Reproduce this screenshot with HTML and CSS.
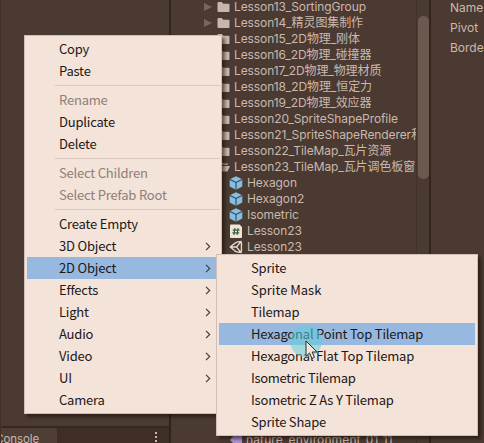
FILE: index.html
```html
<!DOCTYPE html>
<html lang="zh-CN">
<head>
<meta charset="utf-8">
<title>Editor</title>
<link rel="stylesheet" href="styles.css">
</head>
<body>
<svg class="defs" aria-hidden="true">
  <symbol id="folder" viewBox="0 0 13 12"><path d="M.5 2Q.5 1 1.500 1H4.800L6.300 2.700H11.500Q12.500 2.700 12.500 3.700V10Q12.500 11 11.500 11H1.500Q.5 11 .5 10Z" fill="#c9b6ab"/></symbol>
  <symbol id="open" viewBox="0 0 13 12"><path d="M.5 2Q.5 1 1.500 1H5L6.500 2.500H10Q11 2.500 11 3.700H4L1.500 9Z" fill="#c9b6ab"/><path d="M4.500 5H13L10.500 10.500H1.500Z" fill="#c9b6ab"/></symbol>
  <symbol id="cube" viewBox="0 0 14 14"><path d="M7 .3 13.300 3.200V10.600L7 13.800.7 10.600V3.200Z" fill="#88bfdf"/><path d="M1 3.500 7 6.400 13 3.500M7 6.400V13.500" fill="none" stroke="#29485a" stroke-width="1.100"/></symbol>
  <symbol id="script" viewBox="0 0 14 14"><path d="M1 1.500Q1 .5 2 .5H10.500L13 3V13Q13 14 12 14H2Q1 14 1 13Z" fill="#efe5d8"/><path d="M5.900 4 4.900 11M9.100 4 8.100 11M3.700 6.100H10.500M3.400 8.900H10.200" fill="none" stroke="#3c5d3f" stroke-width="1.200"/></symbol>
  <symbol id="unity" viewBox="0 0 14 14"><path d="M5.500 3.600 1.300 7 5.500 10.600M7.500 2.200 12 1.500 12.800 5M12.800 9 12 12.500 7.500 11.900M1.300 7H7.500L11.800 1.800M7.500 7 11.800 12.300M5.500 3.600 7.500 2.200M5.500 10.600 7.500 11.900M12.400 4V10" fill="none" stroke="#eadbd0" stroke-width="1.300"/></symbol>
  <symbol id="chevron" viewBox="0 0 6 9"><path d="M1 .8 4.700 4.500 1 8.200" fill="none" stroke="#4b3d37" stroke-width="1.200"/></symbol>
</svg>

<div class="editor">
  <section class="hierarchy">
    <div class="tabs"><span class="tab">Console</span><span class="dots"><i></i><i></i><i></i></span></div>
  </section>
  <section class="project">
    <ul class="tree">
      <li><i class="fold"></i><svg class="dir"><use href="#folder"/></svg><span>Lesson13_SortingGroup</span></li>
      <li><i class="fold"></i><svg class="dir"><use href="#folder"/></svg><span>Lesson14_精灵图集制作</span></li>
      <li><i class="fold"></i><svg class="dir"><use href="#folder"/></svg><span>Lesson15_2D物理_刚体</span></li>
      <li><i class="fold"></i><svg class="dir"><use href="#folder"/></svg><span>Lesson16_2D物理_碰撞器</span></li>
      <li><i class="fold"></i><svg class="dir"><use href="#folder"/></svg><span>Lesson17_2D物理_物理材质</span></li>
      <li><i class="fold"></i><svg class="dir"><use href="#folder"/></svg><span>Lesson18_2D物理_恒定力</span></li>
      <li><i class="fold"></i><svg class="dir"><use href="#folder"/></svg><span>Lesson19_2D物理_效应器</span></li>
      <li><i class="fold"></i><svg class="dir"><use href="#folder"/></svg><span>Lesson20_SpriteShapeProfile</span></li>
      <li><i class="fold"></i><svg class="dir"><use href="#folder"/></svg><span>Lesson21_SpriteShapeRenderer和</span></li>
      <li><i class="fold"></i><svg class="dir"><use href="#folder"/></svg><span>Lesson22_TileMap_瓦片资源</span></li>
      <li><i class="fold"></i><svg class="dir open"><use href="#open"/></svg><span>Lesson23_TileMap_瓦片调色板窗</span></li>
      <li class="child"><svg class="asset"><use href="#cube"/></svg><span>Hexagon</span></li>
      <li class="child"><svg class="asset"><use href="#cube"/></svg><span>Hexagon2</span></li>
      <li class="child"><svg class="asset"><use href="#cube"/></svg><span>Isometric</span></li>
      <li class="child"><svg class="asset"><use href="#script"/></svg><span>Lesson23</span></li>
      <li class="child"><svg class="asset"><use href="#unity"/></svg><span>Lesson23</span></li>
    </ul>
    <div class="last"><i class="sprite"></i><span>nature_environment_01_11</span></div>
    <div class="track"><div class="thumb"></div></div>
  </section>
  <section class="inspector"><p>Name</p><p>Pivot</p><p>Border</p></section>
</div>

<div class="menu context">
  <div class="item">Copy</div>
  <div class="item">Paste</div>
  <hr>
  <div class="item off">Rename</div>
  <div class="item">Duplicate</div>
  <div class="item">Delete</div>
  <hr>
  <div class="item off">Select Children</div>
  <div class="item off">Select Prefab Root</div>
  <hr>
  <div class="item">Create Empty</div>
  <div class="item">3D Object<svg class="more"><use href="#chevron"/></svg></div>
  <div class="item on">2D Object<svg class="more"><use href="#chevron"/></svg></div>
  <div class="item">Effects<svg class="more"><use href="#chevron"/></svg></div>
  <div class="item">Light<svg class="more"><use href="#chevron"/></svg></div>
  <div class="item">Audio<svg class="more"><use href="#chevron"/></svg></div>
  <div class="item">Video<svg class="more"><use href="#chevron"/></svg></div>
  <div class="item">UI<svg class="more"><use href="#chevron"/></svg></div>
  <div class="item">Camera</div>
</div>

<div class="menu submenu">
  <div class="item">Sprite</div>
  <div class="item wide">Sprite Mask</div>
  <div class="item">Tilemap</div>
  <div class="item on">Hexagonal Point Top Tilemap</div>
  <div class="item">Hexagonal Flat Top Tilemap</div>
  <div class="item tight">Isometric Tilemap</div>
  <div class="item">Isometric Z As Y Tilemap</div>
  <div class="item">Sprite Shape</div>
</div>

<div class="halo"></div>
<svg class="cursor" viewBox="0 0 14 20"><path d="M1 1V16.300L4.500 13 7 18.500 9.500 17.300 7.100 12H12Z" fill="#f3e5dc" stroke="#382d2b" stroke-width="1"/></svg>
</body>
</html>
```
FILE: styles.css
```css
* { box-sizing: border-box; }
body {
  position: relative;
  width: 484px;
  height: 443px;
  margin: 0;
  overflow: hidden;
  background: #4b3a31;
  font: 12px/16px Inter, "Noto Sans CJK SC", sans-serif;
  color: #c9b9ae;
}
.defs { position: absolute; width: 0; height: 0; }
.editor {
  display: grid;
  grid-template-columns: 171px 260px 1fr;
  height: 443px;
}
.hierarchy {
  display: flex;
  flex-direction: column;
  justify-content: flex-end;
  border-left: 1px solid #403027;
  border-right: 2px solid #32231c;
  overflow: hidden;
}
.tabs {
  display: flex;
  justify-content: space-between;
  height: 17px;
  border-top: 2px solid #38281f;
  background: #3e2e26;
}
.tab {
  display: flex;
  justify-content: flex-end;
  width: 56px;
  padding: 3px 18px 0 0;
  border-radius: 0 3px 0 0;
  background: #4f3e35;
  font-size: 11.5px;
  white-space: nowrap;
  letter-spacing: -.1px;
}
.dots { display: flex; flex-direction: column; gap: 2px; padding: 4px 12px 0 0; }
.dots i { width: 2px; height: 2px; background: #c9b9ae; }
.project {
  display: grid;
  grid-template: 256px 1fr / 245px 13px;
  border-right: 2px solid #32231c;
  overflow: hidden;
}
.tree { margin: -1px 0 0; padding: 0 0 0 33px; list-style: none; overflow: hidden; }
.tree li { display: flex; align-items: center; height: 16px; white-space: nowrap; letter-spacing: -.09px; }
.fold {
  flex: none;
  width: 8px;
  height: 8px;
  margin-right: 5px;
  background: #79675d;
  clip-path: polygon(0 0, 100% 50%, 0 100%);
}
.dir { flex: none; width: 13px; height: 12px; margin-right: 4px; }
.tree .child { padding-left: 25px; }
.asset { flex: none; width: 14px; height: 14px; margin-right: 4px; }
.last {
  grid-row: 2;
  display: flex;
  align-items: center;
  gap: 4px;
  height: 16px;
  margin: 176px 0 0 59px;
  white-space: nowrap;
  letter-spacing: .13px;
}
.sprite { width: 12px; height: 13px; background: #ab91d0; clip-path: polygon(0 50%, 45% 0, 100% 15%, 100% 100%, 55% 100%); }
.track { grid-column: 2; grid-row: 1 / 3; border-left: 1px solid #433229; padding: 16px 1px 0 1px; }
.thumb { width: 11px; height: 163px; border-radius: 5px; background: #6b5950; }
.inspector { padding-left: 19px; overflow: hidden; }
.inspector p { height: 20px; margin: 0; }
.menu {
  position: absolute;
  padding: 2px;
  border: 1px solid #cfbfb6;
  background: #f4e3d9;
  color: #211817;
  font: 13px/22px "Noto Sans CJK SC", sans-serif;
  letter-spacing: -.2px;
  box-shadow: 3px 3px 3px rgba(25, 12, 8, .55);
}
.context { left: 24px; top: 35px; width: 198px; }
.submenu { left: 216px; top: 254px; width: 262px; }
.item {
  display: flex;
  align-items: center;
  height: 22px;
  padding: 0 8px 0 32px;
  white-space: nowrap;
}
.item.off { color: #8e7f78; }
.item.on { background: #98b9df; }
.item.wide { letter-spacing: 0; }
.item.tight { letter-spacing: -.3px; }
.more { width: 6px; height: 9px; margin-left: auto; }
.menu hr { height: 1px; margin: 3px -1px 3px 28px; border: 0; background: #d8c8be; }
.halo {
  position: absolute;
  left: 290px;
  top: 325px;
  width: 32px;
  height: 32px;
  border-radius: 50%;
  background: rgba(98, 208, 221, .55);
}
.cursor { position: absolute; left: 305px; top: 340px; width: 14px; height: 20px; }
```
